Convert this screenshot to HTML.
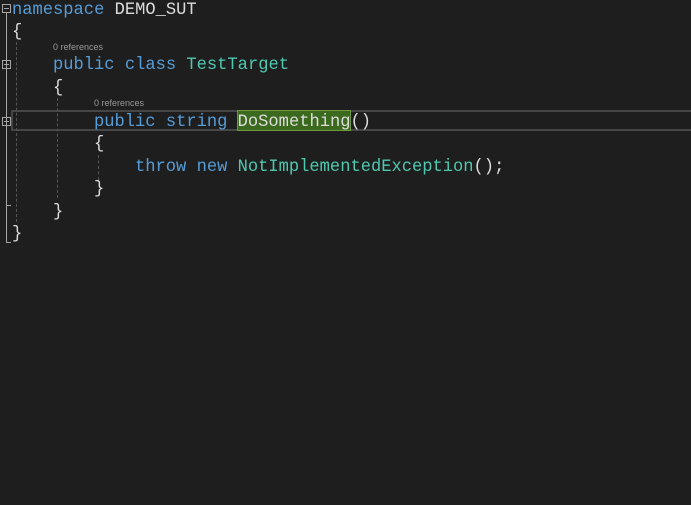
<!DOCTYPE html>
<html><head><style>
body{margin:0;width:691px;height:505px;background:#1e1e1e;overflow:hidden;position:relative;font-family:"Liberation Mono",monospace;}
.l{position:absolute;font-size:17.1px;white-space:pre;color:#dcdcdc;line-height:20px;}
.r{position:absolute;font-family:"Liberation Sans",sans-serif;font-size:9px;color:#999;}
.k{color:#569cd6}.t{color:#4ec9b0}
.f{position:absolute;width:9px;height:9px;border:1px solid #a5a5a5;box-sizing:border-box;}
.f:after{content:"";position:absolute;left:1px;top:3px;width:5px;height:1px;background:#a5a5a5}
.g{position:absolute;border-left:1px dashed #555;}
</style></head><body>
<div style="position:absolute;left:11px;top:110px;width:690px;height:21px;border:2px solid #464646;box-sizing:border-box"></div>
<div style="position:absolute;left:237px;top:110px;width:114px;height:21px;background:#3b6a1e;border:1px solid #6c9a3c;box-sizing:border-box"></div>
<div class="f" style="left:2px;top:4px"></div>
<div class="f" style="left:2px;top:60px"></div>
<div class="f" style="left:2px;top:117px"></div>
<div style="position:absolute;left:6px;top:13px;height:230px;border-left:1px solid #a5a5a5"></div>
<div style="position:absolute;left:6px;top:69px;height:145px;border-left:1px solid #a5a5a5"></div>
<div style="position:absolute;left:6px;top:205px;width:5px;border-top:1px solid #a5a5a5"></div>
<div style="position:absolute;left:6px;top:242px;width:5px;border-top:1px solid #a5a5a5"></div>
<div class="g" style="left:16px;top:42px;height:180px"></div>
<div class="g" style="left:57px;top:98px;height:100px"></div>
<div class="g" style="left:98px;top:155px;height:25px"></div>
<div class="l" style="left:12px;top:1px"><span class="k">namespace</span> DEMO_SUT</div>
<div class="l" style="left:12px;top:23px">{</div>
<div class="r" style="left:53px;top:42px">0 references</div>
<div class="l" style="left:53px;top:56px"><span class="k">public</span> <span class="k">class</span> <span class="t">TestTarget</span></div>
<div class="l" style="left:53px;top:79px">{</div>
<div class="r" style="left:94px;top:98px">0 references</div>
<div class="l" style="left:94px;top:113px"><span class="k">public</span> <span class="k">string</span> DoSomething()</div>
<div class="l" style="left:94px;top:135px">{</div>
<div class="l" style="left:135px;top:158px"><span class="k">throw</span> <span class="k">new</span> <span class="t">NotImplementedException</span>();</div>
<div class="l" style="left:94px;top:180px">}</div>
<div class="l" style="left:53px;top:203px">}</div>
<div class="l" style="left:12px;top:225px">}</div>
</body></html>
